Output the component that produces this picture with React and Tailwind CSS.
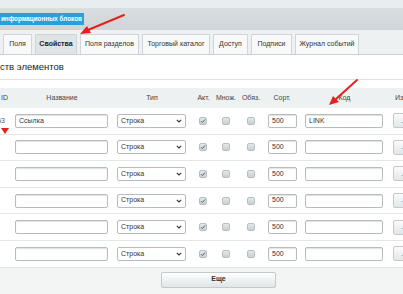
import React from 'react';

const font = { fontFamily: '"Liberation Sans", Arial, sans-serif' };

const tabs = [
  { label: 'Поля', w: 'w-[29px]' },
  { label: 'Свойства', w: 'w-[42px]', active: true },
  { label: 'Поля разделов', w: 'w-[59px]' },
  { label: 'Торговый каталог', w: 'w-[68px]' },
  { label: 'Доступ', w: 'w-[35px]' },
  { label: 'Подписи', w: 'w-[41px]' },
  { label: 'Журнал событий', w: 'w-[64px]' },
];

const cols = 'grid grid-cols-[12px_100px_80px_21px_25px_26px_36px_89px_40px]';

const rows = [
  { id: '63', name: 'Ссылка', code: 'LINK' },
  { id: '', name: '', code: '' },
  { id: '', name: '', code: '' },
  { id: '', name: '', code: '' },
  { id: '', name: '', code: '' },
  { id: '', name: '', code: '' },
];

const Checkbox = ({ checked }) => (
  <div className="w-[8px] h-[8px] rounded-[2px] border border-[#b7bec1] bg-gradient-to-b from-[#e4e8ea] to-[#c9cfd2] flex items-center justify-center">
    {checked && (
      <svg width="6" height="6" viewBox="0 0 6 6">
        <path d="M1 3.2 L2.4 4.6 L5 1.4" stroke="#5d6568" strokeWidth="1" fill="none" />
      </svg>
    )}
  </div>
);

const TextInput = ({ value, className }) => (
  <div
    className={`h-[14px] rounded-[2px] border border-[#b4bcbf] bg-white shadow-[inset_0_1px_1px_rgba(0,0,0,0.12)] flex items-center px-[3px] text-[7px] text-[#333] ${className}`}
  >
    {value}
  </div>
);

const Row = ({ id, name, code }) => (
  <div className={`${cols} h-[26.6px] items-center border-b border-[#e3e7e9] bg-white`}>
    <div className="flex justify-end w-[5px] text-[7px] text-[#555]">{id}</div>
    <div className="pl-[3px]">
      <TextInput value={name} className="w-[93px]" />
    </div>
    <div className="pl-[5px]">
      <div className="w-[69px] h-[14px] rounded-[2px] border border-[#b4bcbf] bg-white flex items-center justify-between px-[3px] text-[7px] text-[#333]">
        <span>Строка</span>
        <svg width="6" height="4" viewBox="0 0 6 4">
          <path d="M0.8 0.8 L3 3 L5.2 0.8" stroke="#333" strokeWidth="1.1" fill="none" />
        </svg>
      </div>
    </div>
    <div className="flex justify-center pl-[1px]">
      <Checkbox checked />
    </div>
    <div className="flex justify-center">
      <Checkbox />
    </div>
    <div className="flex justify-center">
      <Checkbox />
    </div>
    <div className="pl-[4px]">
      <TextInput value="500" className="w-[29px]" />
    </div>
    <div className="pl-[5px]">
      <TextInput value={code} className="w-[78px]" />
    </div>
    <div className="pl-[4px]">
      <div className="w-[22px] h-[15px] rounded-[2px] border border-[#c3c9cc] bg-gradient-to-b from-[#fbfbfb] to-[#e2e6e7] flex items-center justify-center text-[7px] text-[#555]">
        ...
      </div>
    </div>
  </div>
);

export default function App() {
  return (
    <div className="relative w-[403px] h-[294px] overflow-hidden bg-[#f3f5f5]" style={font}>
      {/* top bars */}
      <div className="h-[8px] bg-[#e8edef]" />
      <div className="h-[22px] bg-gradient-to-b from-[#d9dee0] to-[#cfd5d8] flex items-center">
        <div className="h-[12px] w-[84px] bg-[#26a2d8] flex items-center pl-[1px] text-[6.3px] font-bold text-white whitespace-nowrap">
          информационных блоков
        </div>
      </div>

      {/* tabs */}
      <div className="h-[25px] bg-[#eef1f2] flex items-end gap-[3px] pl-[3px] border-b border-[#c9cfd2]">
        {tabs.map((t) => (
          <div
            key={t.label}
            className={`${t.w} h-[20px] shrink-0 flex items-center justify-center border border-b-0 border-[#cfd5d8] text-[7px] whitespace-nowrap ${
              t.active ? 'bg-[#dfe4e6] font-bold text-[#222]' : 'bg-[#f8f9f9] text-[#333]'
            }`}
          >
            {t.label}
          </div>
        ))}
      </div>

      {/* title */}
      <div className="h-[25px] bg-white flex items-center text-[9.5px] text-[#222] border-b border-[#dfe3e5] whitespace-nowrap">
        ств элементов
      </div>
      <div className="h-[8px] bg-white" />

      {/* header */}
      <div className={`${cols} h-[20px] items-center bg-[#eef1f2] text-[7px] text-[#444] whitespace-nowrap`}>
        <div className="pl-[1px]">ID</div>
        <div className="text-center">Название</div>
        <div className="text-center">Тип</div>
        <div className="text-center pl-[2px]">Акт.</div>
        <div className="text-center pl-[1px]">Множ.</div>
        <div className="text-center">Обяз.</div>
        <div className="text-center">Сорт.</div>
        <div className="text-center">Код</div>
        <div className="pl-[6px]">Из</div>
      </div>

      {rows.map((r, i) => (
        <Row key={i} {...r} />
      ))}

      {/* more button */}
      <div className="flex justify-center pt-[4px] pl-[34px]">
        <div className="w-[115px] h-[16px] rounded-[2px] border border-[#c3c9cc] bg-gradient-to-b from-[#ffffff] to-[#e1e5e6] flex items-center justify-center text-[7px] font-bold text-[#333]">
          Еще
        </div>
      </div>

      {/* annotation arrows */}
      <svg className="absolute inset-0 pointer-events-none" width="403" height="294" viewBox="0 0 403 294">
        <line x1="124" y1="15" x2="88" y2="30" stroke="#e3211d" strokeWidth="2" strokeLinecap="round" />
        <polygon points="80,34 87,26 91,33" fill="#e3211d" />
        <line x1="357" y1="80" x2="336" y2="99" stroke="#e3211d" strokeWidth="2" strokeLinecap="round" />
        <polygon points="329,105 333,96 339,102" fill="#e3211d" />
        <polygon points="1,128 9,128 5,134" fill="#e3211d" />
      </svg>
    </div>
  );
}
